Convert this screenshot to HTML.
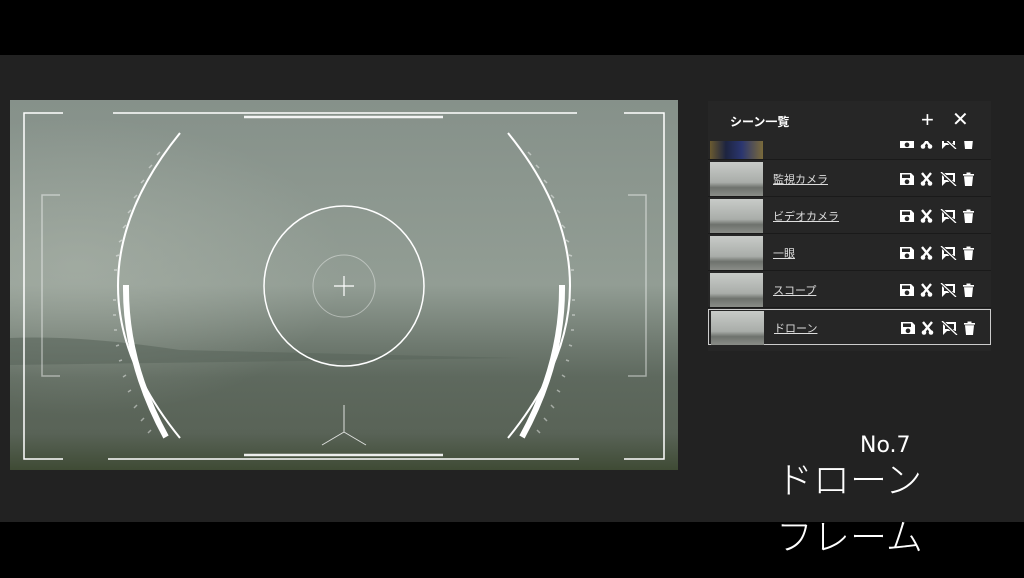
<!DOCTYPE html>
<html><head><meta charset="utf-8"><style>
*{margin:0;padding:0;box-sizing:border-box}
body{width:1024px;height:578px;overflow:hidden;background:#222;position:relative;font-family:"Liberation Sans","Noto Sans CJK JP",sans-serif}
.bar{position:absolute;left:0;width:1024px;background:#000}
.panel{position:absolute;left:708px;top:101px;width:283px;height:250px;background:#262626;overflow:hidden}
.hd{position:absolute;left:22px;top:12px;color:#fff;font-size:12px;font-weight:bold}
.row{position:absolute;left:0;width:283px;height:36px;border-bottom:1px solid #1a1a1a}
.th{position:absolute;left:2px;top:1px;width:53px;height:34px;background:linear-gradient(#c8cbc8,#a9ada9 60%,#6e726d 75%,#8a8d88)}
.lb{position:absolute;left:65px;top:10px;color:#ddd;font-size:11px;text-decoration:underline}
.ic{position:absolute;left:192px;top:11px}
.big{position:absolute;color:#fff;font-family:"Noto Sans CJK JP",sans-serif;font-weight:300;white-space:nowrap}
</style></head><body>
<div class="bar" style="top:0;height:55px"></div>
<div class="bar" style="top:522px;height:56px"></div>
<svg style="position:absolute;left:0;top:0" width="690" height="480">
<defs>
<linearGradient id="g" x1="0" y1="0" x2="0" y2="1">
<stop offset="0" stop-color="#86918a"/><stop offset="0.5" stop-color="#929d94"/>
<stop offset="0.66" stop-color="#6f7a70"/><stop offset="0.75" stop-color="#5e695e"/>
<stop offset="0.9" stop-color="#596357"/><stop offset="1" stop-color="#3f4b35"/></linearGradient>
<radialGradient id="r" cx="0.1" cy="0.45" r="0.4"><stop offset="0" stop-color="#b0b8ae" stop-opacity=".5"/><stop offset="1" stop-color="#b0b8ae" stop-opacity="0"/></radialGradient>
</defs>
<rect x="10" y="100" width="668" height="370" fill="url(#g)"/>
<rect x="10" y="100" width="668" height="370" fill="url(#r)"/>
<path d="M10 338 Q80 335 180 350 L520 358 L10 365Z" fill="#5a655b" opacity=".6"/>
<g stroke="#fff" fill="none" stroke-width="1.5">
<path d="M63 113H24V459H63M624 113H664V459H624"/>
<path d="M113 113H577M108 459H579"/>
<path d="M244 117H443M244 455H443" stroke-width="2.5" opacity=".9"/>
<path d="M180 133Q56 286 180 438M508 133Q632 286 508 438" stroke-width="2"/>
<circle cx="344" cy="286" r="80"/>
<circle cx="344" cy="286" r="31" opacity=".4" stroke-width="1"/>
<path d="M334 286H354M344 276V296" stroke-width="1.2"/>
<path d="M344 405V432L322 445M344 432L366 445" stroke-width="1" opacity=".8"/>
<path d="M60 195H42V376H60M628 195H646V376H628" opacity=".45"/>
<path d="M126 285Q125 362 166 437M562 285Q563 362 522 437" stroke-width="6"/>
</g>
<g stroke="#fff" stroke-width="1.5" opacity=".45">
<path d="M160 152l-3 3M152 165l-3 3M144 180l-3 3M137 195l-3 3M131 210l-3 3M126 225l-3 3M122 240l-3 2M119 255l-3 1M117 270h-3M116 300h-3M116 315h-3M117 330h-3M119 345l-3 1M122 360l-3 1M126 375l-3 2M131 390l-3 2M137 405l-3 3M144 418l-3 3M151 430l-3 3"/>
<path d="M528 152l3 3M536 165l3 3M544 180l3 3M551 195l3 3M557 210l3 3M562 225l3 3M566 240l3 2M569 255l3 1M571 270h3M572 300h3M572 315h3M571 330h3M569 345l3 1M566 360l3 1M562 375l3 2M557 390l3 2M551 405l3 3M544 418l3 3M537 430l3 3"/>
</g>
</svg>
<div class="panel"></div>
<script>
const names=[["",124],["監視カメラ",161],["ビデオカメラ",198],["一眼",235],["スコープ",272],["ドローン",309]];
const icons=`<svg width="76" height="14" viewBox="0 0 76 14" fill="#fff"><path d="M0 1h11l3 3v9H0zM2 2.5v3.5h8V2.5zM7 7.5a2.3 2.3 0 1 0 .01 0z" fill-rule="evenodd"/><path d="M22 1l9 11M31 1l-9 11" stroke="#fff" stroke-width="2.4"/><circle cx="23" cy="11.5" r="2.3"/><circle cx="30" cy="11.5" r="2.3"/><path d="M42 1h13v9h-9l-4 4z"/><path d="M44 3h9v5h-9z" fill="#262626"/><path d="M41 0l15 14" stroke="#262626" stroke-width="3"/><path d="M41 0l15 14" stroke="#fff" stroke-width="1.3"/><path d="M63 2h11v1.6H63zM66.5 .5h4v2h-4zM64 4.2h9l-1 9.8h-7z"/></svg>`;
let h='';
names.forEach((n,i)=>{
 let y=n[1]-101, sel=i==5;
 let thumb=i==0?'background:linear-gradient(90deg,#6a5a30,#1d2440 30%,#2b3670 60%,#7a6a3a)':'';
 h+=`<div class="row" style="top:${y}px;${sel?'border:1px solid #ccc;':''}"><div class="th" style="${thumb}"></div><div class="lb">${n[0]}</div><div class="ic">${icons}</div></div>`;
});
h+='<div style="position:absolute;left:0;top:0;width:283px;height:40px;background:#262626"></div><div class="hd">シーン一覧</div><div style="position:absolute;left:213px;top:8px;color:#fff;font-size:22px;line-height:22px">+</div><div style="position:absolute;left:244px;top:9px;color:#fff;font-size:20px;line-height:20px">✕</div>';
document.querySelector('.panel').innerHTML=h;
</script>
<div class="big" style="left:860px;top:433px;font-family:'DejaVu Sans',sans-serif;font-size:22px;font-weight:normal">No.7</div>
<div class="big" style="left:776px;top:453px;font-size:37px;line-height:48px">ドローン</div>
<div class="big" style="left:776px;top:510px;font-size:37px;line-height:48px">フレーム</div>
</body></html>
